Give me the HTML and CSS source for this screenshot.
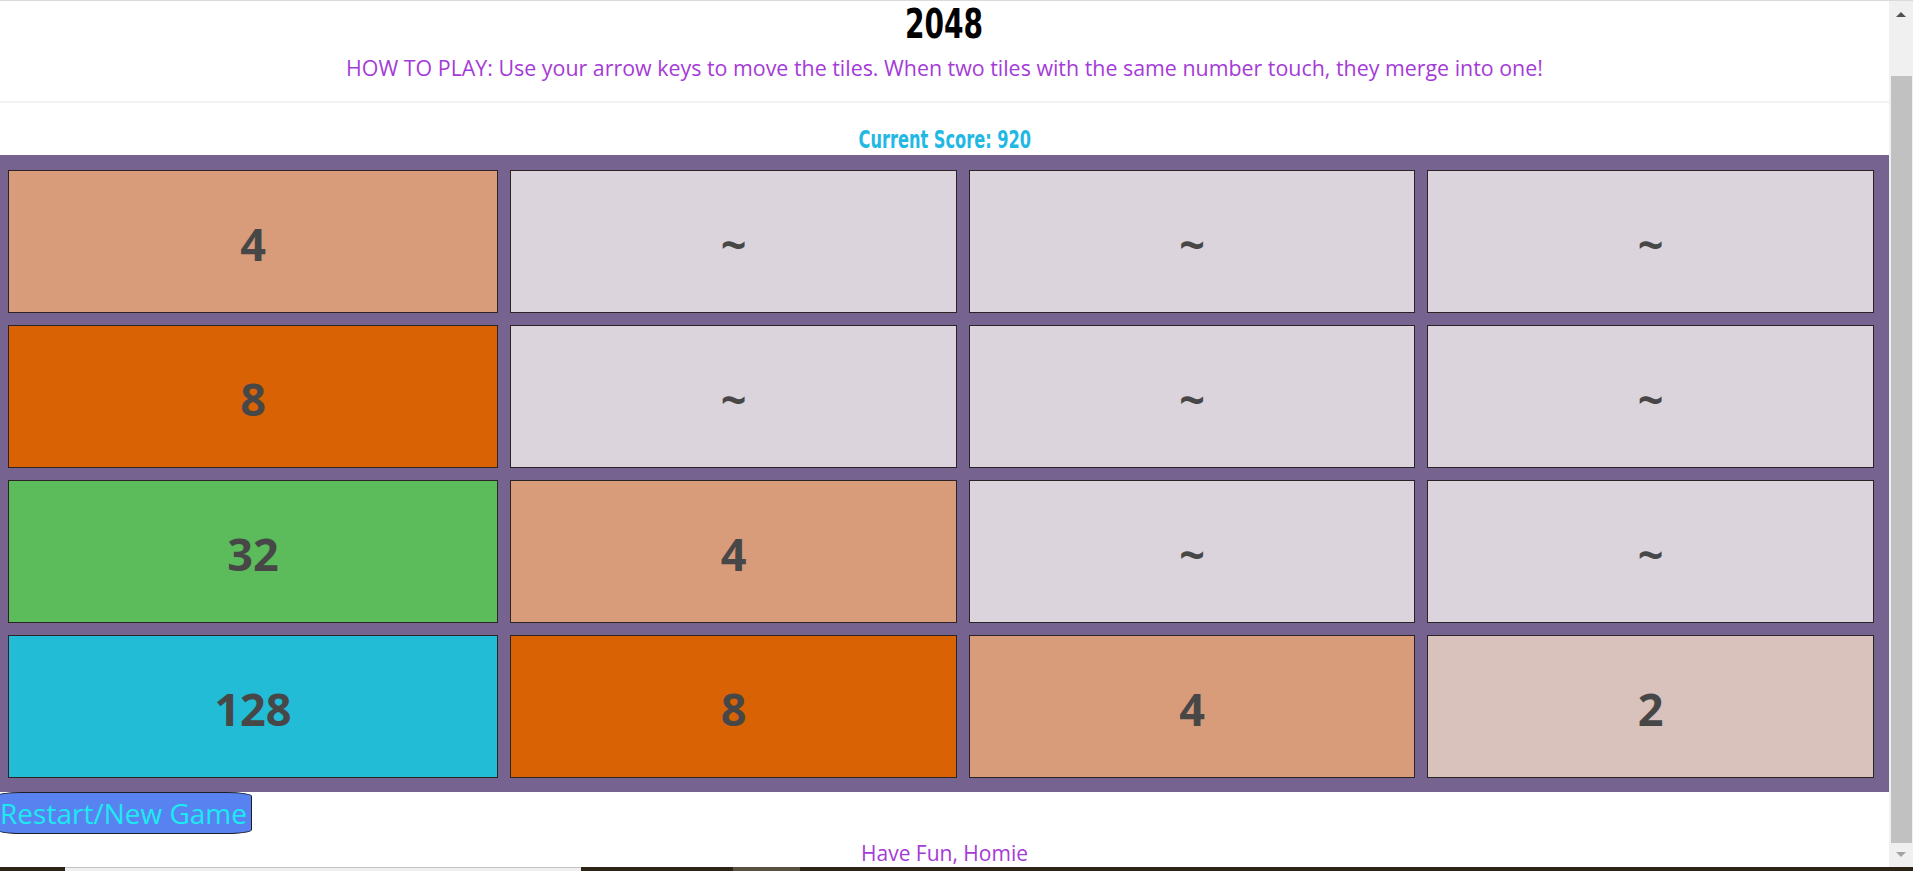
FILE: index.html
```html
<!DOCTYPE html>
<html lang="en">
<head>
<meta charset="utf-8">
<title>2048</title>
<link rel="stylesheet" href="styles.css">
</head>
<body>
<div class="page">
  <header class="header">
    <h1 class="title"><span class="narrow">2048</span></h1>
    <p class="howto">HOW TO PLAY: Use your arrow keys to move the tiles. When two tiles with the same number touch, they merge into one!</p>
  </header>
  <div class="score"><span class="narrow score-text">Current Score: 920</span></div>
  <div class="board">
    <div class="tile t4">4</div>
    <div class="tile empty">~</div>
    <div class="tile empty">~</div>
    <div class="tile empty">~</div>
    <div class="tile t8">8</div>
    <div class="tile empty">~</div>
    <div class="tile empty">~</div>
    <div class="tile empty">~</div>
    <div class="tile t32">32</div>
    <div class="tile t4">4</div>
    <div class="tile empty">~</div>
    <div class="tile empty">~</div>
    <div class="tile t128">128</div>
    <div class="tile t8">8</div>
    <div class="tile t4">4</div>
    <div class="tile t2">2</div>
  </div>
  <button class="restart" type="button">Restart/New Game</button>
  <p class="footer">Have Fun, Homie</p>
</div>
<div class="scrollbar">
  <div class="sb-up"></div>
  <div class="sb-thumb"></div>
  <div class="sb-down"></div>
</div>
<div class="taskbar">
  <div class="tb-dark tb-a"></div>
  <div class="tb-light"></div>
  <div class="tb-dark tb-b"></div>
  <div class="tb-gray"></div>
  <div class="tb-dark tb-c"></div>
</div>
</body>
</html>
```

FILE: styles.css
```css
html, body {
  margin: 0;
  padding: 0;
  background: #ffffff;
  overflow: hidden;
  height: 100%;
}

body {
  font-family: "Open Sans", "Noto Sans", sans-serif;
}

.page {
  width: calc(100% - 24px);
  border-top: 1px solid #dadade;
  box-sizing: border-box;
}

.header {
  border-bottom: 2px solid #f2f2f2;
  height: 100px;
  text-align: center;
}

.title {
  margin: 0;
  padding-top: 1px;
  font-family: "DejaVu Sans Condensed", "DejaVu Sans", sans-serif;
  font-weight: 700;
  font-size: 40px;
  line-height: 44px;
  color: #000000;
}

.narrow {
  display: inline-block;
  transform: scaleX(0.78);
  transform-origin: center;
}

.howto {
  margin: 8px 0 0;
  font-size: 21.4px;
  line-height: 28px;
  color: #a53bd7;
}

.score {
  text-align: center;
  margin-top: 22px;
  font-family: "DejaVu Sans Condensed", "DejaVu Sans", sans-serif;
  font-weight: 700;
  font-size: 25px;
  line-height: 30px;
  color: #22b8e4;
}

.score-text {
  transform: scaleX(0.72);
}

.board {
  background: #77638f;
  display: grid;
  grid-template-columns: 490fr 447fr 446fr 447fr;
  grid-auto-rows: 143px;
  gap: 12px 12px;
  padding: 15px 15px 14px 8px;
}

.tile {
  box-sizing: border-box;
  border: 1px solid #2a2424;
  display: flex;
  align-items: center;
  justify-content: center;
  font-family: "Open Sans", "Noto Sans", sans-serif;
  font-weight: 700;
  font-size: 45px;
  color: #474747;
  padding-top: 4px;
}

.empty { background: #dbd4dc; }
.t2 { background: #d9c2bb; }
.t4 { background: #d89c7a; }
.t8 { background: #d96304; }
.t32 { background: #5cbb5a; }
.t128 { background: #22bcd6; }

.restart {
  display: block;
  margin: 0 0 0 -4px;
  width: 256px;
  height: 42px;
  padding: 0 4px 0 0;
  background: #5882f0;
  color: #1ceaf0;
  border: 1px solid #1e1e2a;
  border-radius: 10%;
  font-family: "Open Sans", "Noto Sans", sans-serif;
  font-size: 28px;
  line-height: 40px;
  text-align: right;
  white-space: nowrap;
  overflow: visible;
}

.footer {
  margin: 6px 0 0;
  text-align: center;
  font-size: 21px;
  line-height: 26px;
  color: #a53bd7;
}

.scrollbar {
  position: fixed;
  top: 0;
  right: 0;
  width: 24px;
  height: 867px;
  background: #f0f0f0;
  border-top: 1px solid #dadade;
  box-sizing: border-box;
}

.sb-up {
  position: absolute;
  top: 11px;
  left: 7px;
  width: 0;
  height: 0;
  border-left: 5px solid transparent;
  border-right: 5px solid transparent;
  border-bottom: 5px solid #505050;
}

.sb-thumb {
  position: absolute;
  top: 75px;
  left: 2px;
  width: 21px;
  height: 767px;
  background: #c1c1c1;
}

.sb-down {
  position: absolute;
  top: 851px;
  left: 7px;
  width: 0;
  height: 0;
  border-left: 5px solid transparent;
  border-right: 5px solid transparent;
  border-top: 5px solid #a3a3a3;
}

.taskbar {
  position: fixed;
  left: 0;
  right: 0;
  bottom: 0;
  height: 4px;
  display: flex;
}

.tb-dark { background: #2c2417; }
.tb-a { width: 65px; }
.tb-light {
  width: 516px;
  background: #efefef;
  border-top: 1px solid #c4c4c4;
  box-sizing: border-box;
}
.tb-b { width: 152px; }
.tb-gray { width: 67px; background: #5a5040; }
.tb-c { flex: 1; }
```
